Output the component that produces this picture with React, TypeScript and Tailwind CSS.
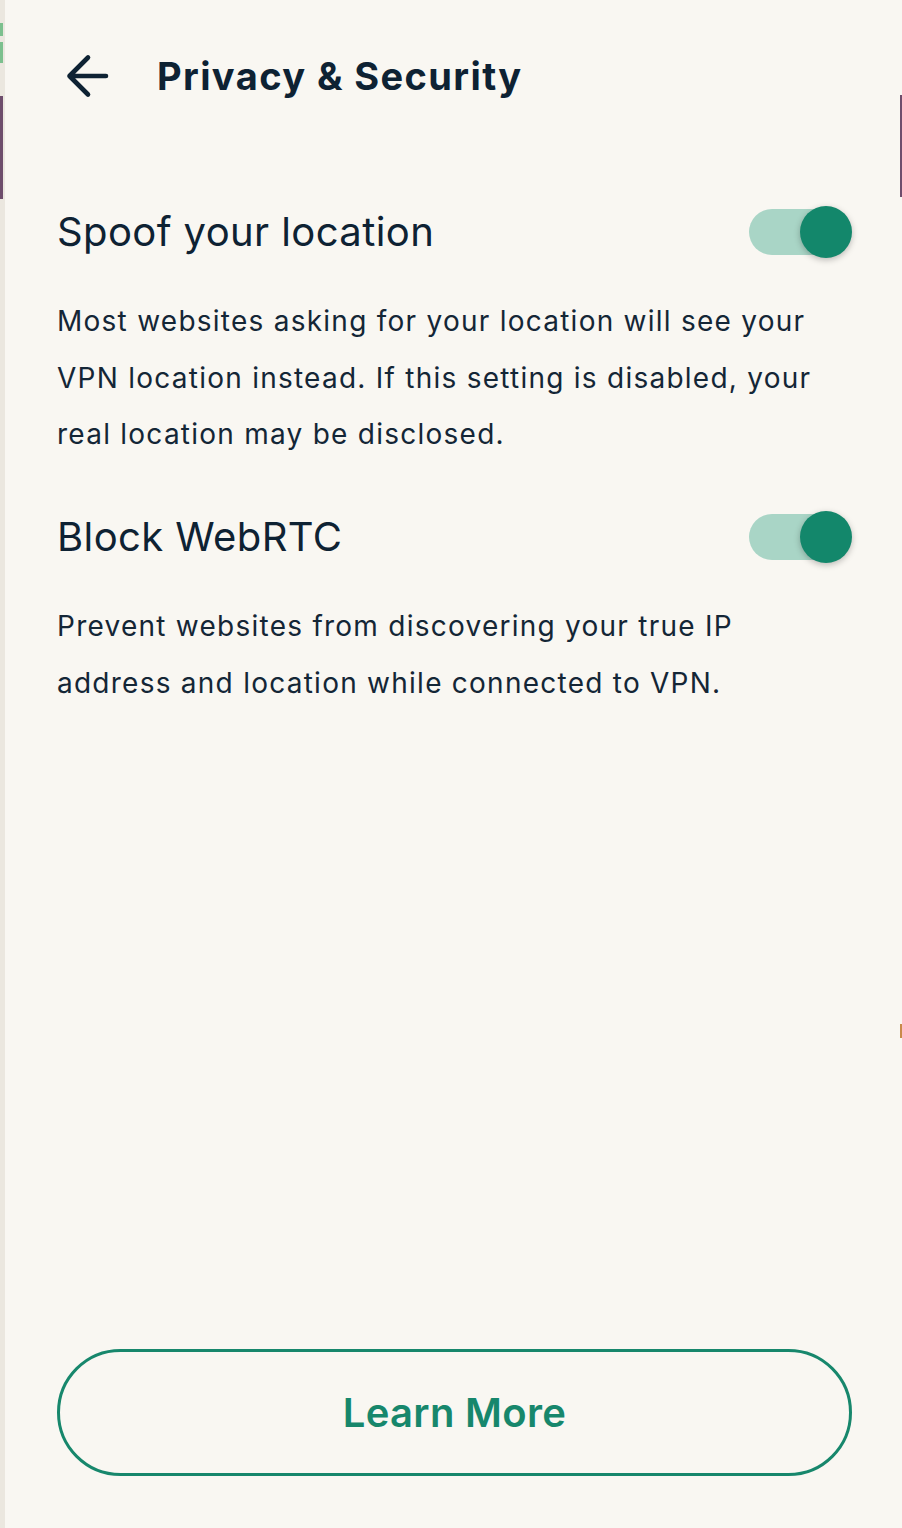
const Toggle = () => (
  <div className="relative h-[52px] w-[103px] shrink-0">
    <div className="absolute left-0 top-[3px] h-[46px] w-[100px] rounded-full bg-[#a9d5c6]" />
    <div className="absolute right-0 top-0 h-[52px] w-[52px] rounded-full bg-[#13876b] shadow-[0_2px_6px_rgba(0,0,0,0.25)]" />
  </div>
);

const App = () => {
  return (
    <div className="relative flex h-[1528px] w-[902px] overflow-hidden bg-[#f9f7f2] font-['Inter','Noto_Sans',sans-serif] text-[#0e2233]">
      {/* left window edge */}
      <div className="flex w-[5px] shrink-0 flex-col bg-[#ebe7df]">
        <div className="mt-[23px] h-[13px] w-[3px] bg-[#7cc08e]" />
        <div className="mt-[6px] h-[21px] w-[3px] bg-[#7cc08e]" />
        <div className="mt-[33px] h-[103px] w-[3px] bg-[#6e4d6c]" />
      </div>

      <div className="flex flex-1 flex-col pl-[52px] pr-[50px]">
        <header className="flex h-[152px] items-center">
          <svg width="50" height="48" viewBox="0 0 50 48" className="ml-[4px] shrink-0">
            <path d="M45 24H8.5M27 5.5L8.5 24L27 42.5" fill="none" stroke="#0e2233" strokeWidth="4.6" strokeLinecap="round" strokeLinejoin="round" />
          </svg>
          <h1 className="ml-[46px] text-[38px] font-bold leading-none tracking-[1.4px]">Privacy &amp; Security</h1>
        </header>

        <div className="mt-[54px] flex items-center justify-between">
          <h2 className="text-[40px] font-normal leading-none tracking-[0.4px]">Spoof your location</h2>
          <Toggle />
        </div>
        <p className="mt-[35px] max-w-[775px] text-[28px] leading-[56.5px] tracking-[1.25px] text-[#142636]">
          Most websites asking for your location will see your VPN location instead. If this setting is disabled, your real location may be disclosed.
        </p>

        <div className="mt-[48px] flex items-center justify-between">
          <h2 className="text-[40px] font-normal leading-none tracking-[0.4px]">Block WebRTC</h2>
          <Toggle />
        </div>
        <p className="mt-[35px] max-w-[775px] text-[28px] leading-[57px] tracking-[1.25px] text-[#142636]">
          Prevent websites from discovering your true IP address and location while connected to VPN.
        </p>

        <button className="mb-[52px] mt-auto flex h-[127px] w-full items-center justify-center rounded-full border-[3px] border-[#17876c] text-[40px] font-semibold tracking-[0.3px] text-[#17876c]">
          Learn More
        </button>
      </div>

      {/* right window edge */}
      <div className="absolute right-0 top-[95px] h-[102px] w-[2px] bg-[#6e4d6c]" />
      <div className="absolute right-0 top-[1024px] h-[14px] w-[2px] bg-[#c98a4a]" />
    </div>
  );
};

export default App;
